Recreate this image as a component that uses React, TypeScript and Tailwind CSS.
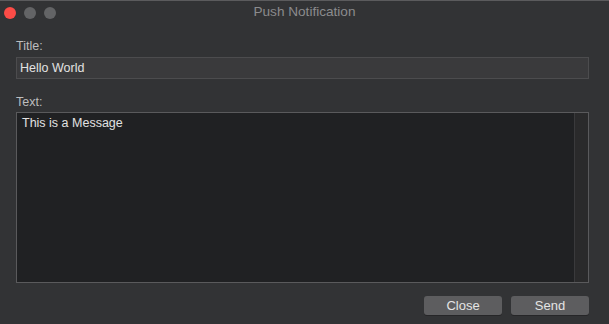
import { FC } from "react";

const font = { fontFamily: '"Liberation Sans", Arial, sans-serif' };

const App: FC = () => {
  return (
    <div
      className="w-[609px] h-[324px] bg-[#323335] border-t border-[#5b5b5d] flex flex-col text-[12.5px] text-[#dcdcdc] overflow-hidden"
      style={font}
    >
      {/* title bar */}
      <div className="h-[23px] flex items-center px-[4px] relative">
        <div className="flex gap-[8px]">
          <span className="w-[12px] h-[12px] rounded-full bg-[#fc4c47]" />
          <span className="w-[12px] h-[12px] rounded-full bg-[#636466]" />
          <span className="w-[12px] h-[12px] rounded-full bg-[#636466]" />
        </div>
        <div className="absolute inset-0 flex items-center justify-center text-[#8b8b8d] text-[13.6px]">
          Push Notification
        </div>
      </div>

      <div className="flex-1 flex flex-col px-[16px] pr-[20px]">
        <label className="mt-[14px] h-[16px] leading-[16px] text-[#bdbdbe]">Title:</label>
        <div className="mt-[3px] h-[22px] bg-[#3a3a3c] border border-[#4c4c4e] flex items-center px-[3px] text-[#e2e2e2]">
          Hello World
        </div>

        <label className="mt-[15px] h-[16px] leading-[16px] text-[#bdbdbe]">Text:</label>
        <div className="mt-[2px] h-[171px] bg-[#202123] border border-[#5a5a5c] flex">
          <div className="flex-1 px-[5px] pt-[2px] leading-[16px] text-[#e2e2e2]">This is a Message</div>
          <div className="w-[14px] bg-[#2a2a2b] border-l border-[#3a3a3c]" />
        </div>

        <div className="mt-[13px] flex justify-end gap-[9px]">
          <button className="w-[78px] h-[19px] rounded-[3px] bg-[#5d5d5f] text-[#e4e4e4] text-[13px] leading-[19px] shadow-[0_1px_0_#262628]">
            Close
          </button>
          <button className="w-[78px] h-[19px] rounded-[3px] bg-[#5d5d5f] text-[#e4e4e4] text-[13px] leading-[19px] shadow-[0_1px_0_#262628]">
            Send
          </button>
        </div>
      </div>
    </div>
  );
};

export default App;
